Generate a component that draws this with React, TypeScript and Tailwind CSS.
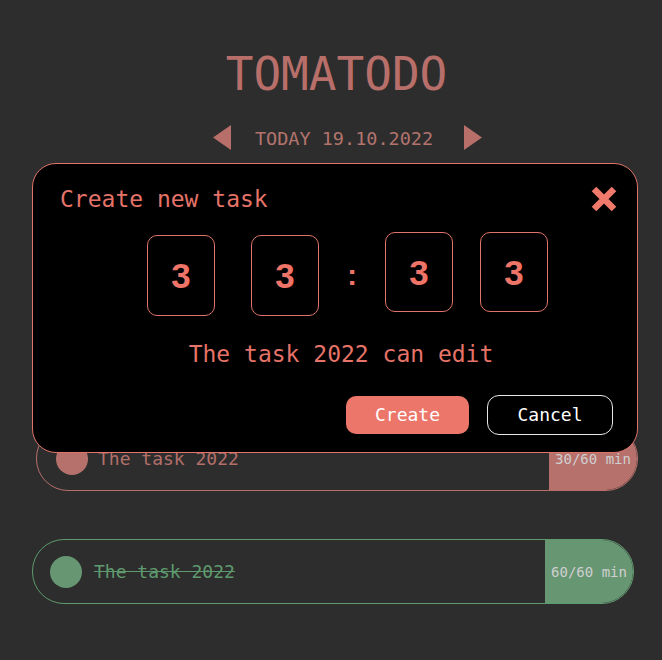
import { useState } from "react";

const mono = "font-['DejaVu_Sans_Mono',monospace]";

function TriangleLeft() {
    return (
        <svg width="18" height="25" viewBox="0 0 18 25">
            <polygon points="18,0 18,25 0,12.5" fill="#b86f6a" />
        </svg>
    );
}

function TriangleRight() {
    return (
        <svg width="18" height="25" viewBox="0 0 18 25">
            <polygon points="0,0 0,25 18,12.5" fill="#b86f6a" />
        </svg>
    );
}

interface TaskProps {
    title: string;
    progress: string;
    done?: boolean;
    className?: string;
}

function TaskItem({ title, progress, done, className }: TaskProps) {
    const tone = done
        ? { border: "border-[#5f9a6e]", fill: "bg-[#679673]", text: "ml-[12px] text-[#5f9a6e] line-through", pad: "pl-[17px]" }
        : { border: "border-[#b86f6a]", fill: "bg-[#b6716c]", text: "ml-[10px] text-[#b36f6a]", pad: "pl-[19px]" };
    return (
        <div className={`flex h-[65px] w-[602px] items-stretch rounded-[32px] border ${tone.border} ${className ?? ""}`}>
            <div className={`flex flex-1 items-center ${tone.pad}`}>
                <div className={`h-[32px] w-[32px] rounded-full ${tone.fill}`} />
                <span className={`text-[18px] leading-none ${tone.text}`}>{title}</span>
            </div>
            <div className={`flex w-[88px] items-center justify-center rounded-r-[32px] ${tone.fill}`}>
                <span className="text-[14px] leading-none text-[#cfcfcf]">{progress}</span>
            </div>
        </div>
    );
}

function DigitBox({ value, className }: { value: string; className?: string }) {
    return (
        <div
            className={`flex w-[68px] items-center justify-center rounded-[10px] border border-[#e0746a] ${className ?? ""}`}
        >
            <span className="font-['Liberation_Sans',Arial,sans-serif] text-[35px] font-bold leading-none text-[#ee7468]">
                {value}
            </span>
        </div>
    );
}

export default function App() {
    const [open] = useState(true);

    return (
        <div className={`relative min-h-[660px] w-full bg-[#2d2d2d] ${mono}`}>
            <h1 className="pl-[11px] pt-[51px] text-center text-[46px] font-normal leading-none text-[#b86f6a]">
                TOMATODO
            </h1>

            <div className="mt-[28px] flex items-center justify-center pl-[33px]">
                <TriangleLeft />
                <span className="ml-[24px] mr-[31px] mt-[3px] text-[18.5px] leading-none text-[#b3746d]">
                    TODAY 19.10.2022
                </span>
                <TriangleRight />
            </div>

            <div className="flex flex-col">
                <TaskItem title="The task 2022" progress="30/60 min" className="ml-[36px] mt-[276px]" />
                <TaskItem title="The task 2022" progress="60/60 min" done className="ml-[32px] mt-[48px]" />
            </div>

            {open && (
                <div className="absolute left-[32px] top-[163px] flex h-[290px] w-[606px] flex-col rounded-[24px] border border-[#e0746a] bg-black">
                    <div className="flex items-center justify-between pl-[27px] pr-[20px] pt-[22px]">
                        <span className="text-[23px] leading-none text-[#e57368]">Create new task</span>
                        <svg width="26" height="26" viewBox="0 0 26 26">
                            <path d="M3 3 L23 23 M23 3 L3 23" stroke="#ef7a6c" strokeWidth="6.5" />
                        </svg>
                    </div>

                    <div className="mt-[20px] flex items-start pl-[114px]">
                        <DigitBox value="3" className="mt-[3px] h-[81px]" />
                        <DigitBox value="3" className="ml-[36px] mt-[3px] h-[81px]" />
                        <div className="flex h-[80px] w-[66px] items-center justify-center pt-[6px]">
                            <span className="font-['Liberation_Sans',Arial,sans-serif] text-[29px] font-bold leading-none text-[#ee7468]">
                                :
                            </span>
                        </div>
                        <DigitBox value="3" className="h-[80px]" />
                        <DigitBox value="3" className="ml-[27px] h-[80px]" />
                    </div>

                    <p className="mt-[27px] pl-[12px] text-center text-[23px] leading-none text-[#e57368]">
                        The task 2022 can edit
                    </p>

                    <div className="mt-[29px] flex items-center justify-end gap-[18px] pr-[24px]">
                        <button className="h-[38px] w-[123px] rounded-[10px] bg-[#ec766a] text-[18px] leading-none text-white">
                            Create
                        </button>
                        <button className="h-[40px] w-[126px] rounded-[12px] border border-[#e8e8e8] bg-black text-[18px] leading-none text-white">
                            Cancel
                        </button>
                    </div>
                </div>
            )}
        </div>
    );
}
